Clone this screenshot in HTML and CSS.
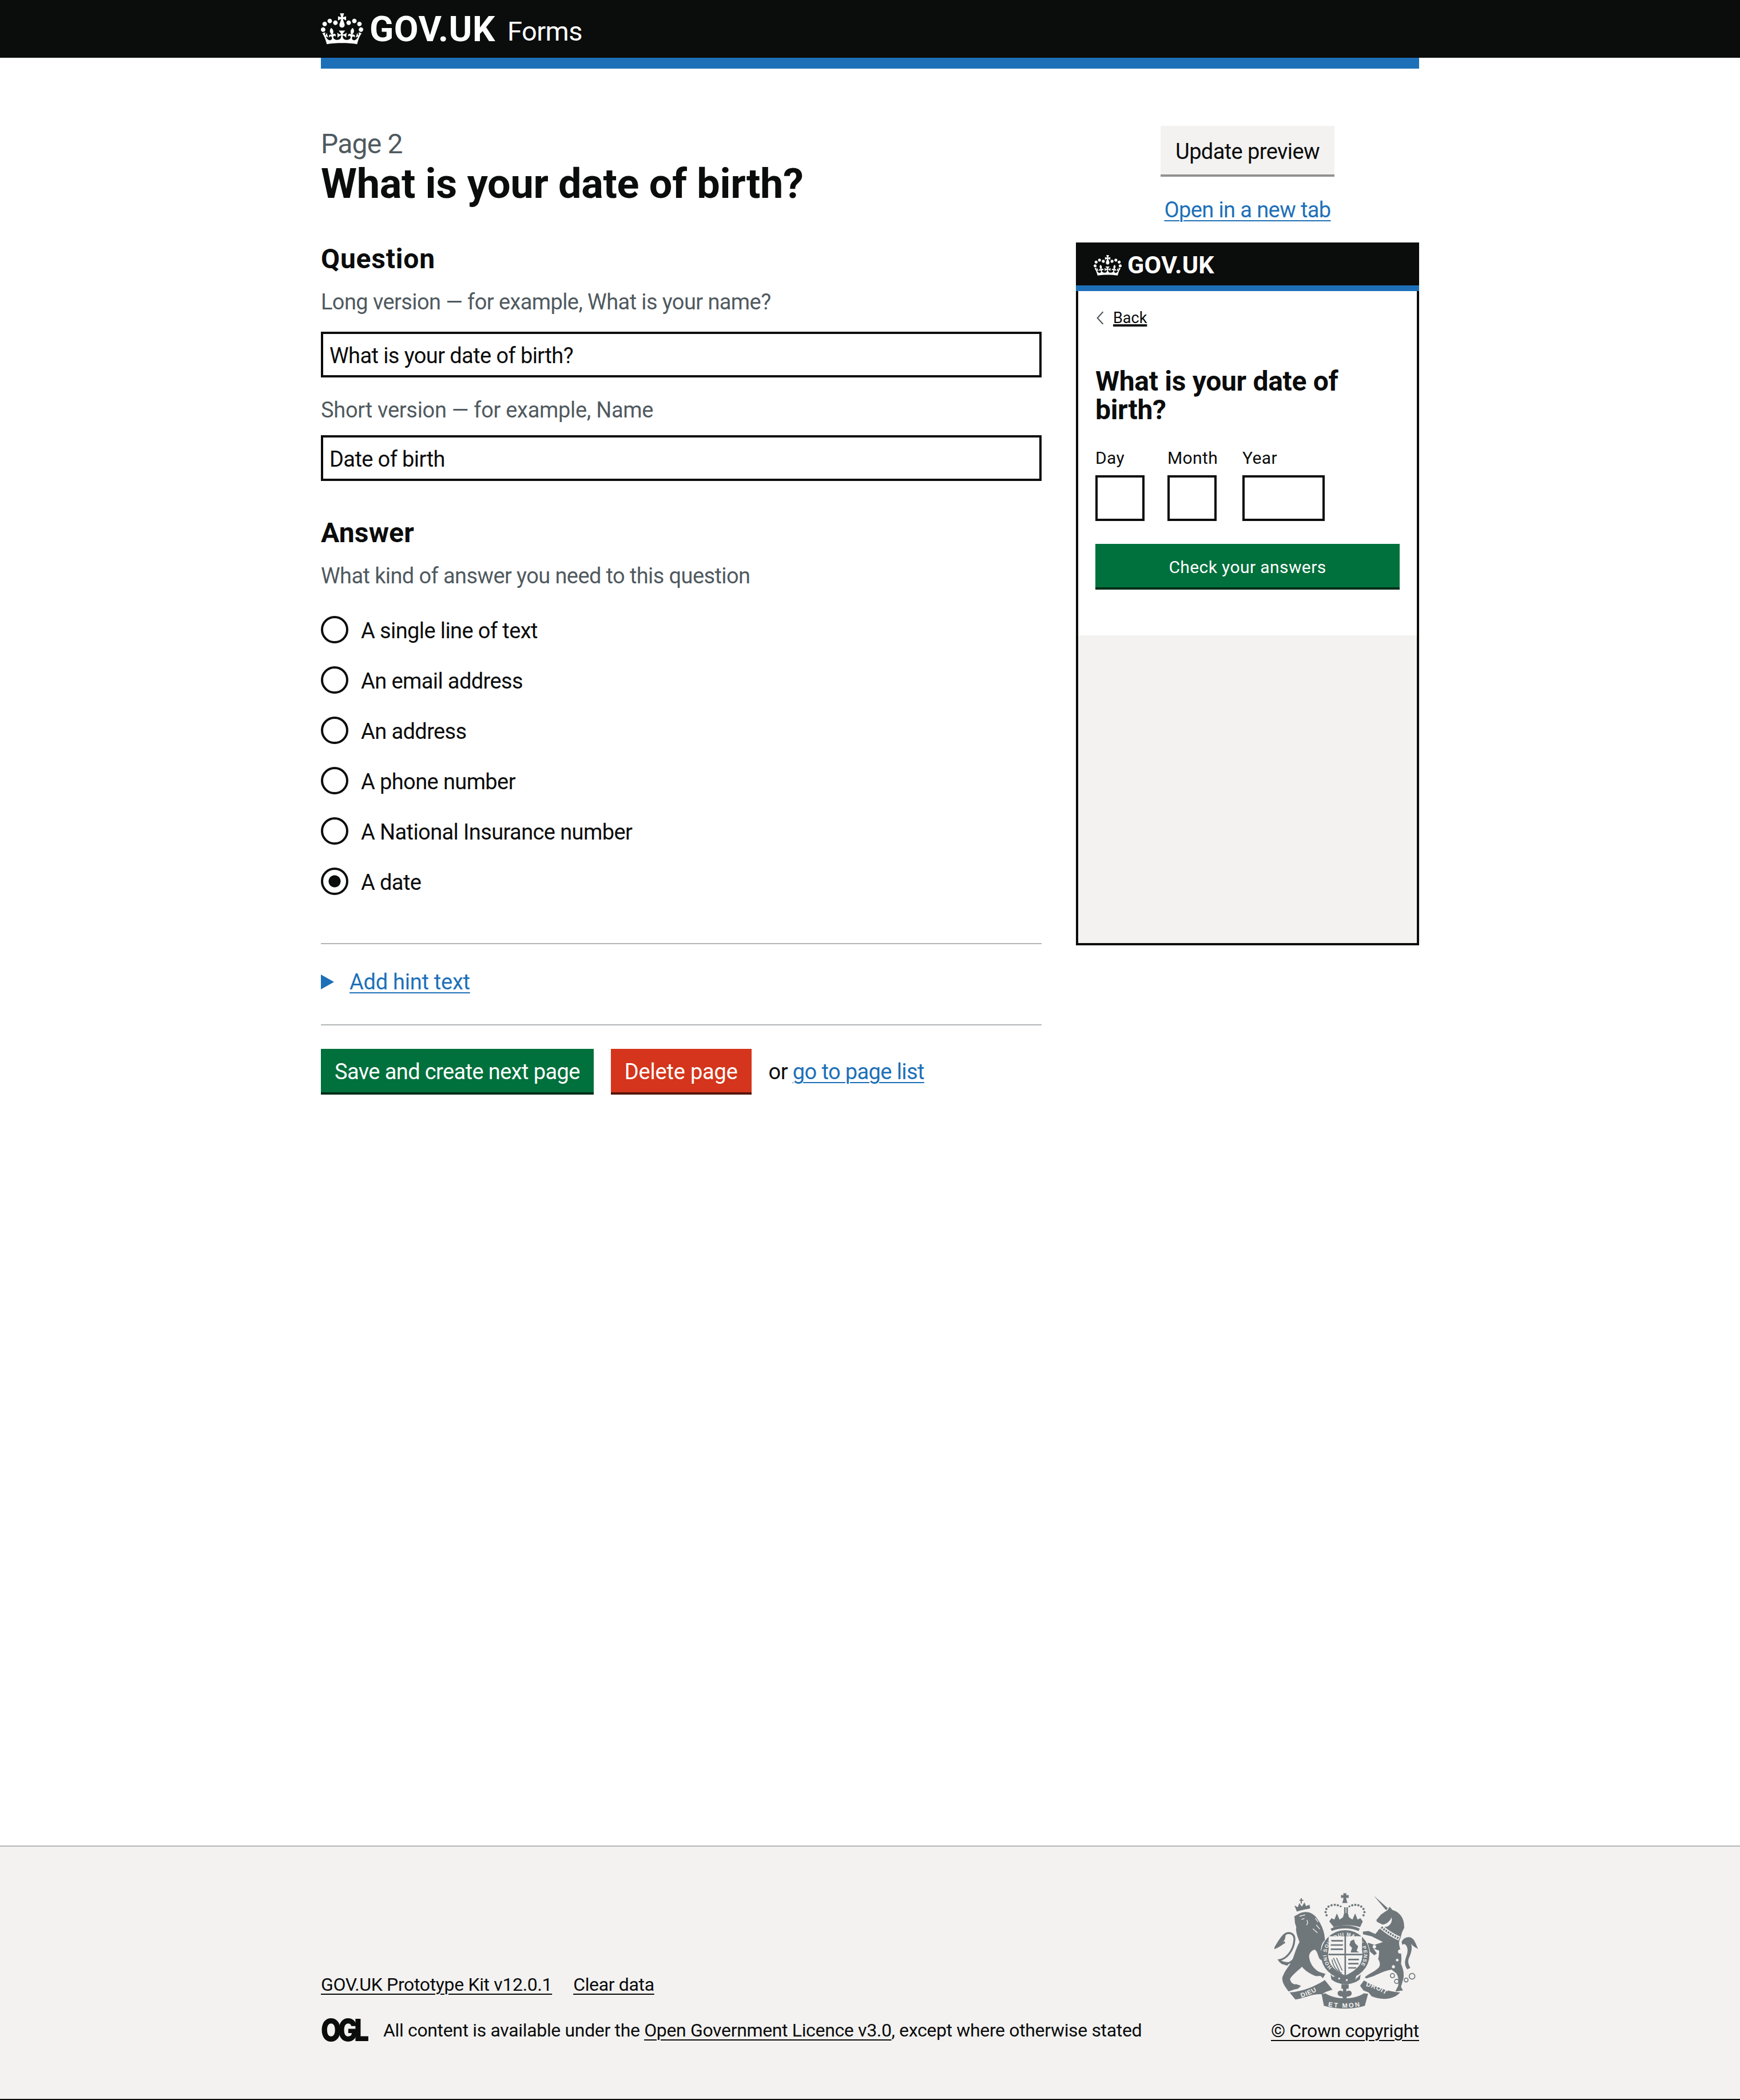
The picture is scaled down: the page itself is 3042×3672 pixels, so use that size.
FILE: index.html
```html
<!DOCTYPE html>
<html lang="en">
<head>
<meta charset="utf-8">
<title>What is your date of birth? - GOV.UK Forms</title>
<link rel="stylesheet" href="styles.css">
</head>
<body>
<svg class="defs" width="0" height="0" aria-hidden="true"><defs>
<symbol id="crown" viewBox="0 0 132 97"><path fill="currentColor" fill-rule="evenodd" d="M25 30.2c3.5 1.5 7.7-.2 9.1-3.7 1.5-3.6-.2-7.8-3.9-9.2-3.6-1.4-7.6.3-9.1 3.9-1.4 3.5.3 7.5 3.9 9zM9 39.5c3.6 1.5 7.8-.2 9.2-3.7 1.5-3.6-.2-7.8-3.9-9.1-3.6-1.5-7.6.2-9.1 3.8-1.4 3.5.3 7.5 3.8 9zM4.4 57.2c3.5 1.5 7.7-.2 9.1-3.8 1.5-3.6-.2-7.7-3.9-9.1-3.5-1.5-7.6.3-9.1 3.8-1.4 3.5.3 7.6 3.9 9.1zm38.3-21.4c3.5 1.5 7.7-.2 9.1-3.8 1.5-3.6-.2-7.7-3.9-9.1-3.6-1.5-7.6.3-9.1 3.8-1.3 3.6.4 7.7 3.9 9.1zm64.4-5.6c-3.6 1.5-7.8-.2-9.1-3.7-1.5-3.6.2-7.8 3.8-9.2 3.6-1.4 7.7.3 9.2 3.9 1.3 3.5-.4 7.5-3.9 9zm15.9 9.3c-3.6 1.5-7.7-.2-9.1-3.7-1.5-3.6.2-7.8 3.7-9.1 3.6-1.5 7.7.2 9.2 3.8 1.5 3.5-.3 7.5-3.8 9zm4.7 17.7c-3.6 1.5-7.8-.2-9.2-3.8-1.5-3.6.2-7.7 3.9-9.1 3.6-1.5 7.7.3 9.2 3.8 1.3 3.5-.4 7.6-3.9 9.1zM89.3 35.8c-3.6 1.5-7.8-.2-9.2-3.8-1.4-3.6.2-7.7 3.9-9.1 3.6-1.5 7.7.3 9.2 3.8 1.4 3.6-.3 7.7-3.9 9.1zM69.7 17.7l8.9 4.7V9.3l-8.9 2.8c-.2-.3-.5-.6-.9-.9L72.4 0H59.6l3.5 11.2c-.3.3-.6.5-.9.9l-8.8-2.8v13.1l8.8-4.7c.3.3.6.7.9.9l-5 15.4v.1c-.2.8-.4 1.6-.4 2.4 0 4.1 3.1 7.5 7 8.1h.2c.3 0 .7.1 1 .1.4 0 .7 0 1-.1h.2c4-.6 7.1-4.1 7.1-8.1 0-.8-.1-1.7-.4-2.4V34l-5.1-15.4c.4-.2.7-.6 1-.9zM66 92.8c16.9 0 32.8 1.1 47.1 3.2 4-16.9 8.9-26.7 14-33.5l-9.6-3.4c1 4.9 1.1 7.2 0 10.2-1.5-1.4-3-4.3-4.2-8.7L108.6 76c2.8-2 5-3.2 7.5-3.3-4.4 9.4-10 11.9-13.6 11.2-4.3-.8-6.3-4.6-5.6-7.9 1-4.7 5.7-5.9 8-.5 4.3-8.7-3-11.4-7.6-8.8 7.1-7.2 7.9-13.5 2.1-21.1-8 6.1-8.1 12.3-4.5 20.8-4.7-5.4-12.1-2.5-9.5 6.2 3.4-5.2 7.9-2 7.2 3.1-.6 4.3-6.4 7.8-13.5 7.2-10.3-.9-10.9-8-11.2-13.8 2.5-.5 7.1 1.8 11 7.3L80.2 60c-4.1 4.4-8 5.3-12.3 5.4 1.4-4.4 8-11.6 8-11.6H55.5s6.4 7.2 7.9 11.6c-4.2-.1-8-1-12.3-5.4l1.4 16.4c3.9-5.5 8.5-7.7 10.9-7.3-.3 5.8-.9 12.8-11.1 13.8-7.2.6-12.9-2.9-13.5-7.2-.7-5 3.8-8.3 7.1-3.1 2.7-8.7-4.6-11.6-9.4-6.2 3.7-8.5 3.6-14.7-4.6-20.8-5.8 7.6-5 13.9 2.2 21.1-4.7-2.6-11.9.1-7.7 8.8 2.3-5.5 7.1-4.2 8.1.5.7 3.3-1.3 7.1-5.7 7.9-3.5.7-9-1.8-13.5-11.2 2.5.1 4.7 1.3 7.5 3.3l-4.7-15.4c-1.2 4.4-2.7 7.2-4.3 8.7-1.1-3-.9-5.3 0-10.2l-9.5 3.4c5 6.9 9.9 16.7 14 33.5 14.8-2.1 30.8-3.2 47.7-3.2z"/></symbol>
</defs></svg>

<header class="site-header">
  <div class="wrap header-inner">
    <svg class="crown" aria-hidden="true"><use href="#crown"/></svg>
    <span class="brand">GOV.UK</span>
    <span class="service">Forms</span>
  </div>
</header>
<div class="wrap"><div class="blue-bar"></div></div>

<main class="wrap page-grid">
  <form class="editor">
    <p class="caption">Page 2</p>
    <h1 class="title">What is your date of birth?</h1>

    <h2 class="section section-question">Question</h2>
    <p class="hint hint-first hint-long">Long version — for example, What is your name?</p>
    <input class="text-input input-first" type="text" value="What is your date of birth?">
    <p class="hint hint-second">Short version — for example, Name</p>
    <input class="text-input input-second" type="text" value="Date of birth">

    <h2 class="section section-answer">Answer</h2>
    <p class="hint hint-first">What kind of answer you need to this question</p>

    <div class="radios">
      <label class="radio-row"><input class="radio" type="radio" name="kind"><span>A single line of text</span></label>
      <label class="radio-row"><input class="radio" type="radio" name="kind"><span>An email address</span></label>
      <label class="radio-row"><input class="radio" type="radio" name="kind"><span>An address</span></label>
      <label class="radio-row"><input class="radio" type="radio" name="kind"><span>A phone number</span></label>
      <label class="radio-row"><input class="radio" type="radio" name="kind"><span>A National Insurance number</span></label>
      <label class="radio-row"><input class="radio" type="radio" name="kind" checked><span>A date</span></label>
    </div>

    <div class="details">
      <span class="triangle"></span>
      <a class="link hint-link" href="#">Add hint text</a>
    </div>

    <div class="actions">
      <button class="btn btn-green" type="button">Save and create next page</button>
      <button class="btn btn-red" type="button">Delete page</button>
      <span class="or-text">or <a class="link" href="#">go to page list</a></span>
    </div>
  </form>

  <aside class="side">
    <button class="btn btn-grey" type="button">Update preview</button>
    <a class="link open-link" href="#">Open in a new tab</a>
    <div class="preview">
      <div class="pv-header">
        <svg class="pv-crown" aria-hidden="true"><use href="#crown"/></svg>
        <span class="pv-brand">GOV.UK</span>
      </div>
      <div class="pv-body">
        <a class="pv-back" href="#"><svg class="pv-chevron" viewBox="0 0 12 24" aria-hidden="true"><path d="M11 2 2 12l9 10" fill="none" stroke="#505a5f" stroke-width="2"/></svg><span>Back</span></a>
        <h2 class="pv-title">What is your date of birth?</h2>
        <div class="pv-date">
          <div class="pv-field"><span class="pv-label">Day</span><span class="pv-box"></span></div>
          <div class="pv-field pv-field-month"><span class="pv-label">Month</span><span class="pv-box"></span></div>
          <div class="pv-field"><span class="pv-label">Year</span><span class="pv-box pv-box-year"></span></div>
        </div>
        <div class="pv-submit">Check your answers</div>
      </div>
      <div class="pv-rest"></div>
    </div>
  </aside>
</main>

<footer class="site-footer">
  <div class="wrap footer-inner">
    <div class="footer-left">
      <div class="footer-links">
        <a class="footer-link" href="#">GOV.UK Prototype Kit v12.0.1</a>
        <a class="footer-link" href="#">Clear data</a>
      </div>
      <div class="footer-licence">
        <span class="ogl">OGL</span>
        <span>All content is available under the <a class="footer-link" href="#">Open Government Licence v3.0</a>, except where otherwise stated</span>
      </div>
    </div>
    <div class="footer-right">
      <svg class="crest" viewBox="130 80 760 615" aria-hidden="true">
        <defs>
          <path id="arcL" d="M272 632c40-12 78-30 108-52"/>
          <path id="arcM" d="M412 678c56 10 120 10 176-2"/>
          <path id="arcR" d="M610 572c44 10 86 30 124 58"/>
          <path id="arcG" d="M432 475A98 98 0 1 1 572 475"/>
        </defs>
        <g fill="#6f777b">
          <!-- royal crown -->
          <path d="M492 84h16v11l12-3v18l-12-3v10l6 18h-28l6-18v-10l-12 3V92l12 3z"/>
          <path d="M418 232l12-17 15 7 13-32 14 32 18-12 6-20V158h8v30h4v-30h8v32l6 20 18 12 14-32 13 32 15-7 12 17-14 30c-42-14-98-14-138 0z"/>
          <path d="M425 270c46-24 106-24 153 0l-6 12c-44-18-96-18-141 0z"/>
          <g>
            <circle cx="404" cy="200" r="6"/><circle cx="399" cy="183" r="6"/><circle cx="403" cy="167" r="6"/><circle cx="414" cy="154" r="6"/><circle cx="430" cy="147" r="6"/><circle cx="447" cy="145" r="6"/><circle cx="463" cy="147" r="6"/><circle cx="478" cy="153" r="5"/>
            <circle cx="598" cy="200" r="6"/><circle cx="603" cy="183" r="6"/><circle cx="598" cy="167" r="6"/><circle cx="586" cy="154" r="6"/><circle cx="571" cy="147" r="6"/><circle cx="555" cy="145" r="6"/><circle cx="539" cy="147" r="6"/><circle cx="524" cy="153" r="5"/>
          </g>
          <!-- lion -->
          <path d="M262 190c23-12 58-12 83 15 20 23 40 57 47 95l4 30c-18 15-24 40-18 65l27 45c-10 5-30 0-40-15-10-30-15-40-23-45-17 5-27 15-30 35 3 35 23 65 53 82l33 11-13 22-13-12-22 2c-30-10-60-30-75-50-20 20-50 40-63 65 3 15 13 30 33 27l25 8-15 15-23 5-27 10c-20-25-37-50-33-75 13-35 33-55 50-85 13-30 18-60 40-100-12-30-22-60-17-78l-7-22-3-35z"/>
          <path d="M240 420c-30 45-70 40-85 15 35-5 75-45 80-105 3-35-30-45-50-30-20 15-35 45-50 70 25-10 40-25 50-30" fill="none" stroke="#6f777b" stroke-width="10"/>
          <path d="M135 370c10-30 30-60 55-72l-4 26c-12 22-28 38-51 46zM152 432c20 10 40 16 60 14l-14 18c-20-2-36-14-46-32z"/>
          <path d="M248 180l-13-32 18 10 8-22 13 18 14-22 8 20 18-8 4 20c-22 4-48 10-70 16z"/>
          <path d="M262 118h6v-8h6v8h8v6h-8v14h-6v-14h-6z"/>
          <g fill="none" stroke="#f3f2f1" stroke-width="4">
            <path d="M262 205l30-8M272 222l16-6M300 225c6 8 6 20-2 26M350 250l18 22M332 270l24 22M345 215l14 20"/>
          </g>
          <!-- unicorn -->
          <path d="M652 97l74 66-10 10z"/>
          <path d="M665 225l25-30 35-23 10-17 15 17c30 8 55 33 60 68l2 25-12 25-8 30c-12 20-7 35-2 55 5 20 10 45 5 80 10 25 17 45 13 75l-13 45 10 20-40 5 15-30c5-25 0-50-10-65l-25-20c-30 5-65 20-95 35l-38 12-7-7c15-15 45-25 67-45 18-15 13-35 3-50 5-20 5-35 5-45l-30-10 18 25-13 10-30-25-15-35 15-5 30 10 45-15-60-30-45-10v-15l30-3 35 16c10-13 20-28 35-36l25-2c25-10 30-35 25-50-10 30-45 45-55 35l-20-10z"/>
          <path d="M798 340c10-28 50-36 66-8 8 14 14 30 20 44-14-6-26-14-36-26 8 24 0 50-12 76-6 16-2 34 8 50l-16 8c-16-24-14-44-6-66 10-26 10-48-2-62-6-6-14-6-18 0z"/>
          <g fill="none" stroke="#f3f2f1">
            <path d="M692 262c28 24 58 44 94 60" stroke-width="22"/>
            <path d="M692 262c28 24 58 44 94 60" stroke="#6f777b" stroke-width="11" stroke-dasharray="9 5"/>
          </g>
          <g fill="#f3f2f1"><circle cx="790" cy="390" r="11"/><circle cx="775" cy="435" r="7"/><circle cx="755" cy="470" r="8"/><circle cx="655" cy="365" r="9"/><circle cx="665" cy="280" r="8"/></g>
          <g fill="none" stroke="#6f777b" stroke-width="5"><circle cx="750" cy="517" r="11"/><circle cx="772" cy="547" r="11"/><circle cx="822" cy="540" r="10"/><circle cx="853" cy="520" r="15"/></g>
          <!-- garter, shield -->
          <circle cx="502" cy="405" r="131" fill="#f3f2f1"/>
          <circle cx="502" cy="405" r="109" fill="none" stroke="#6f777b" stroke-width="37"/>
          <path d="M415 310h175v108c0 46-40 76-88 98-48-22-87-52-87-98z" fill="#f3f2f1"/>
          <path d="M498 308h8v210h-8zM414 402h178v8H414z"/>
          <g fill="none" stroke="#6f777b" stroke-width="8">
            <path d="M428 334h62M426 356h64M426 378h64M518 432h56M518 454h54M518 476h42"/>
            <path d="M440 424l34 76M456 424l30 66M432 432c6 34 24 60 52 72" stroke-width="5"/>
          </g>
          <path d="M530 335l18-8 6 20 16 16-8 24 14 8h-46l8-24-14-14z"/>
          <path d="M425 510l26 28c34 16 70 16 104 0l28-28-4 26c-42 34-108 34-150 0z"/>
          <path d="M438 522l62-4 60 2-6 20c-34 14-74 14-108 0z"/>
          <g fill="#f3f2f1"><circle cx="470" cy="532" r="5"/><circle cx="510" cy="540" r="5"/></g>
          <!-- paw over the garter -->
          <path d="M372 380l34 58c-12 6-30 0-40-14l-10-36z"/>
          <!-- motto ribbon -->
          <path d="M210 605c70-5 130-30 185-65l40 50-37 13-18 12c-50-5-110 25-140 27z"/>
          <path d="M378 615l20-5c52 35 152 35 202 0l22 2-17 63c-65 20-145 20-215 0z"/>
          <path d="M580 570l20-28c60 33 120 58 190 63-30 35-90 45-150 20l-15-20-27-10z"/>
          <path d="M482 562h38v24h-12v14c10-8 26-6 28 8 1 12-12 20-24 18l-6 14h-14l-6-14c-12 2-25-6-24-18 2-14 18-16 28-8v-14h-8z"/>
        </g>
        <g class="crest-text">
          <text><textPath href="#arcL">DIEU</textPath></text>
          <text><textPath href="#arcM" textLength="170">ET MON</textPath></text>
          <text><textPath href="#arcR">DROIT</textPath></text>
          <text class="crest-garter"><textPath href="#arcG" textLength="440">HONI SOIT QUI MAL Y PENSE</textPath></text>
        </g>
      </svg>
      <a class="footer-link crown-copy" href="#">© Crown copyright</a>
    </div>
  </div>
</footer>
</body>
</html>
```
FILE: styles.css
```css
* { box-sizing: border-box; }
html, body { margin: 0; padding: 0; }
body {
  min-height: 100vh;
  display: flex;
  flex-direction: column;
  font-family: Roboto, "Noto Sans", "Liberation Sans", sans-serif;
  color: #0b0c0c;
  background: #fff;
  font-size: 38px;
  letter-spacing: -0.6px;
}
.defs { position: absolute; }
.wrap { width: 1920px; margin: 0 auto; }
p, h1, h2 { margin: 0; }

/* header */
.site-header { background: #0b0c0c; height: 101px; color: #fff; }
.header-inner { display: flex; align-items: center; height: 100%; }
.crown { width: 74px; height: 55px; margin-right: 11px; color: #fff; }
.brand { font-weight: 700; font-size: 62px; line-height: 1; letter-spacing: .6px; margin-right: 21px; }
.service { font-size: 47px; line-height: 1; letter-spacing: -.6px; padding-top: 8px; }
.blue-bar { height: 19px; background: #1d70b8; }

/* layout */
.page-grid {
  flex: 1;
  display: grid;
  grid-template-columns: 1260px 600px;
  column-gap: 60px;
  align-items: start;
  padding-top: 100px;
}

/* editor */
.caption { font-size: 48px; line-height: 64px; letter-spacing: -.8px; color: #505a5f; }
.title { font-size: 72px; line-height: 76px; font-weight: 700; letter-spacing: -.3px; margin-bottom: 61px; }
.section { font-size: 48px; line-height: 60px; font-weight: 700; letter-spacing: .2px; }
.section-question { padding-top: 4px; line-height: 56px; letter-spacing: .8px; }
.section-answer { margin-top: 61px; }
.hint { font-size: 38px; line-height: 50px; color: #505a5f; }
.hint-first { margin-top: 20px; }
.hint-long { padding-top: 4px; line-height: 46px; }
.hint-second { margin-top: 32px; letter-spacing: -.3px; }
.text-input {
  display: block;
  width: 100%;
  height: 80px;
  border: 4px solid #0b0c0c;
  border-radius: 0;
  padding: 3px 11px 0;
  font: inherit;
  letter-spacing: inherit;
  font-size: 38px;
  color: #0b0c0c;
  background: #fff;
}
.input-first { margin-top: 29px; }
.input-second { margin-top: 19px; }

.radios { margin-top: 25px; margin-bottom: 64px; }
.radio-row { display: flex; align-items: center; height: 88px; gap: 22px; font-size: 38px; }
.radio-row span { padding-top: 4px; }
.radio {
  appearance: none;
  -webkit-appearance: none;
  margin: 0;
  width: 48px;
  height: 48px;
  border: 4px solid #0b0c0c;
  border-radius: 50%;
  background: #fff;
}
.radio:checked { background: radial-gradient(circle, #0b0c0c 0 10px, #fff 11px); }

.details {
  display: flex;
  align-items: center;
  gap: 27px;
  height: 144px;
  padding-bottom: 8px;
  border-top: 2px solid #b1b4b6;
  border-bottom: 2px solid #b1b4b6;
  font-size: 38px;
}
.triangle {
  width: 0;
  height: 0;
  border-style: solid;
  border-width: 13px 0 13px 23px;
  border-color: transparent transparent transparent #1d70b8;
}
.link { color: #1d70b8; text-decoration: underline; text-decoration-thickness: 2px; text-underline-offset: 5px; }
.hint-link { letter-spacing: -.25px; }

.actions { display: flex; align-items: center; margin-top: 41px; gap: 30px; }
.btn {
  border: 0;
  height: 80px;
  padding: 0 24px;
  font: inherit;
  letter-spacing: inherit;
  font-size: 38px;
  line-height: 1;
  color: #fff;
  cursor: pointer;
}
.btn-green { background: #00703c; box-shadow: inset 0 -4px 0 #002d18; }
.btn-red { background: #d4351c; box-shadow: inset 0 -4px 0 #55150b; letter-spacing: -.2px; }
.btn-grey { background: #f3f2f1; color: #0b0c0c; height: 89px; padding: 0 26px; box-shadow: inset 0 -4px 0 #929191; }
.or-text { font-size: 38px; }

/* preview column */
.side { display: flex; flex-direction: column; align-items: center; }
.open-link { font-size: 38px; line-height: 50px; margin-top: 33px; margin-bottom: 32px; }
.preview {
  width: 100%;
  height: 1229px;
  border: 4px solid #0b0c0c;
  display: flex;
  flex-direction: column;
  background: #f3f2f1;
}
.pv-header {
  height: 81px;
  background: #0b0c0c;
  border-bottom: 10px solid #1d70b8;
  margin: 0 -4px;
  padding: 0 0 0 31px;
  display: flex;
  align-items: center;
  color: #fff;
  flex: none;
}
.pv-crown { width: 49px; height: 36px; margin-right: 10px; }
.pv-brand { font-weight: 700; font-size: 43px; line-height: 1; letter-spacing: .3px; }
.pv-body { background: #fff; padding: 30px 30px 0; height: 602px; flex: none; }
.pv-back { display: flex; align-items: center; gap: 15px; font-size: 27px; line-height: 34px; letter-spacing: 0; color: #0b0c0c; }
.pv-back span { text-decoration: underline; text-underline-offset: 4px; }
.pv-chevron { width: 16px; height: 26px; }
.pv-title { font-size: 48px; line-height: 50px; font-weight: 700; letter-spacing: -.3px; margin-top: 69px; width: 480px; }
.pv-date { display: flex; gap: 40px; margin-top: 39px; }
.pv-field { display: flex; flex-direction: column; gap: 10px; }
.pv-field-month { width: 91px; }
.pv-label { font-size: 30px; line-height: 40px; letter-spacing: .4px; white-space: nowrap; }
.pv-box { display: block; width: 86px; height: 80px; border: 4px solid #0b0c0c; background: #fff; }
.pv-box-year { width: 144px; }
.pv-submit {
  margin-top: 40px;
  height: 80px;
  background: #00703c;
  box-shadow: inset 0 -4px 0 #002d18;
  color: #fff;
  font-size: 30px;
  letter-spacing: .4px;
  display: flex;
  align-items: center;
  justify-content: center;
}
.pv-rest { flex: 1; }

/* footer */
.site-footer {
  background: #f3f2f1;
  border-top: 2px solid #b1b4b6;
  border-bottom: 2px solid #0b0c0c;
  height: 445px;
  font-size: 32px;
  letter-spacing: -.35px;
  flex: none;
}
.footer-inner { display: flex; justify-content: space-between; height: 100%; padding-top: 80px; }
.footer-left { align-self: flex-start; padding-top: 140px; }
.footer-links { display: flex; gap: 37px; line-height: 42px; }
.footer-link { color: #0b0c0c; text-decoration: underline; text-decoration-thickness: 2px; text-underline-offset: 5px; }
.footer-licence { display: flex; align-items: center; gap: 26px; margin-top: 38px; line-height: 42px; }
.ogl { font-family: Inter, sans-serif; font-weight: 900; font-size: 54px; line-height: 42px; letter-spacing: -7px; width: 83px; transform: scaleX(.85); transform-origin: left center; }
.footer-right { display: flex; flex-direction: column; align-items: flex-end; }
.crest { width: 253px; height: 205px; display: block; margin-bottom: 16px; }
.crown-copy { margin-top: 2px; }
.crest-text text { fill: #f3f2f1; font-family: "Liberation Sans", sans-serif; font-weight: 700; font-size: 34px; letter-spacing: 2px; }
.crest-text .crest-garter { font-size: 26px; letter-spacing: 0; }
```
